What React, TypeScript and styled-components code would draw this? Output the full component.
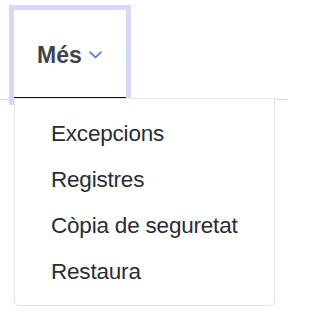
import React from "react";
import styled, { createGlobalStyle } from "styled-components";

const Global = createGlobalStyle`
  html, body { margin: 0; padding: 0; background: #ffffff; }
  body { font-family: "Liberation Sans", Arial, sans-serif; }
`;

const Page = styled.div`
  width: 288px;
  min-height: 313px;
  background: #ffffff;
  overflow: hidden;
`;

const Nav = styled.nav`
  position: relative;
  height: 100px;
  box-sizing: border-box;
  padding: 10px 0 0 14px;
  border-bottom: 1px solid #e0e0e3;
  display: flex;
  align-items: flex-start;
`;

const Tab = styled.button`
  height: 90px;
  box-sizing: border-box;
  padding: 0 24px 0 23px;
  margin: 0;
  display: flex;
  align-items: center;
  gap: 7px;
  background: #ffffff;
  border: none;
  border-bottom: 3px solid #111111;
  box-shadow: 0 0 0 5px #d4daf5;
  font-family: "Liberation Sans", Arial, sans-serif;
  font-weight: 700;
  font-size: 23px;
  color: #3e4350;
  cursor: pointer;
`;

const Label = styled.span`
  display: block;
  padding-top: 3px;
`;

const Menu = styled.ul`
  position: absolute;
  top: 98px;
  left: 14px;
  width: 261px;
  box-sizing: border-box;
  margin: 0;
  padding: 12px 0 10px;
  list-style: none;
  background: #ffffff;
  border: 1px solid #e3e3e6;
  border-top-color: #e6e6e9;
  border-radius: 0 0 5px 5px;
  z-index: 2;
`;

const Item = styled.li`
  height: 46px;
  line-height: 46px;
  padding-left: 36px;
  font-size: 22.5px;
  color: #2a2d33;
  letter-spacing: -0.2px;
  white-space: nowrap;
`;

const Chevron = () => (
  <svg width="13" height="8" viewBox="0 0 13 8" fill="none" style={{ marginTop: 2 }}>
    <path d="M1 1.2 L6.5 6.3 L12 1.2" stroke="#5b6ee0" strokeWidth="1.6" strokeLinecap="round" strokeLinejoin="round" />
  </svg>
);

export default function App() {
  const items = ["Excepcions", "Registres", "Còpia de seguretat", "Restaura"];
  return (
    <>
      <Global />
      <Page>
        <Nav>
          <Tab>
            <Label>Més</Label>
            <Chevron />
          </Tab>
          <Menu>
            {items.map((t) => (
              <Item key={t}>{t}</Item>
            ))}
          </Menu>
        </Nav>
      </Page>
    </>
  );
}
